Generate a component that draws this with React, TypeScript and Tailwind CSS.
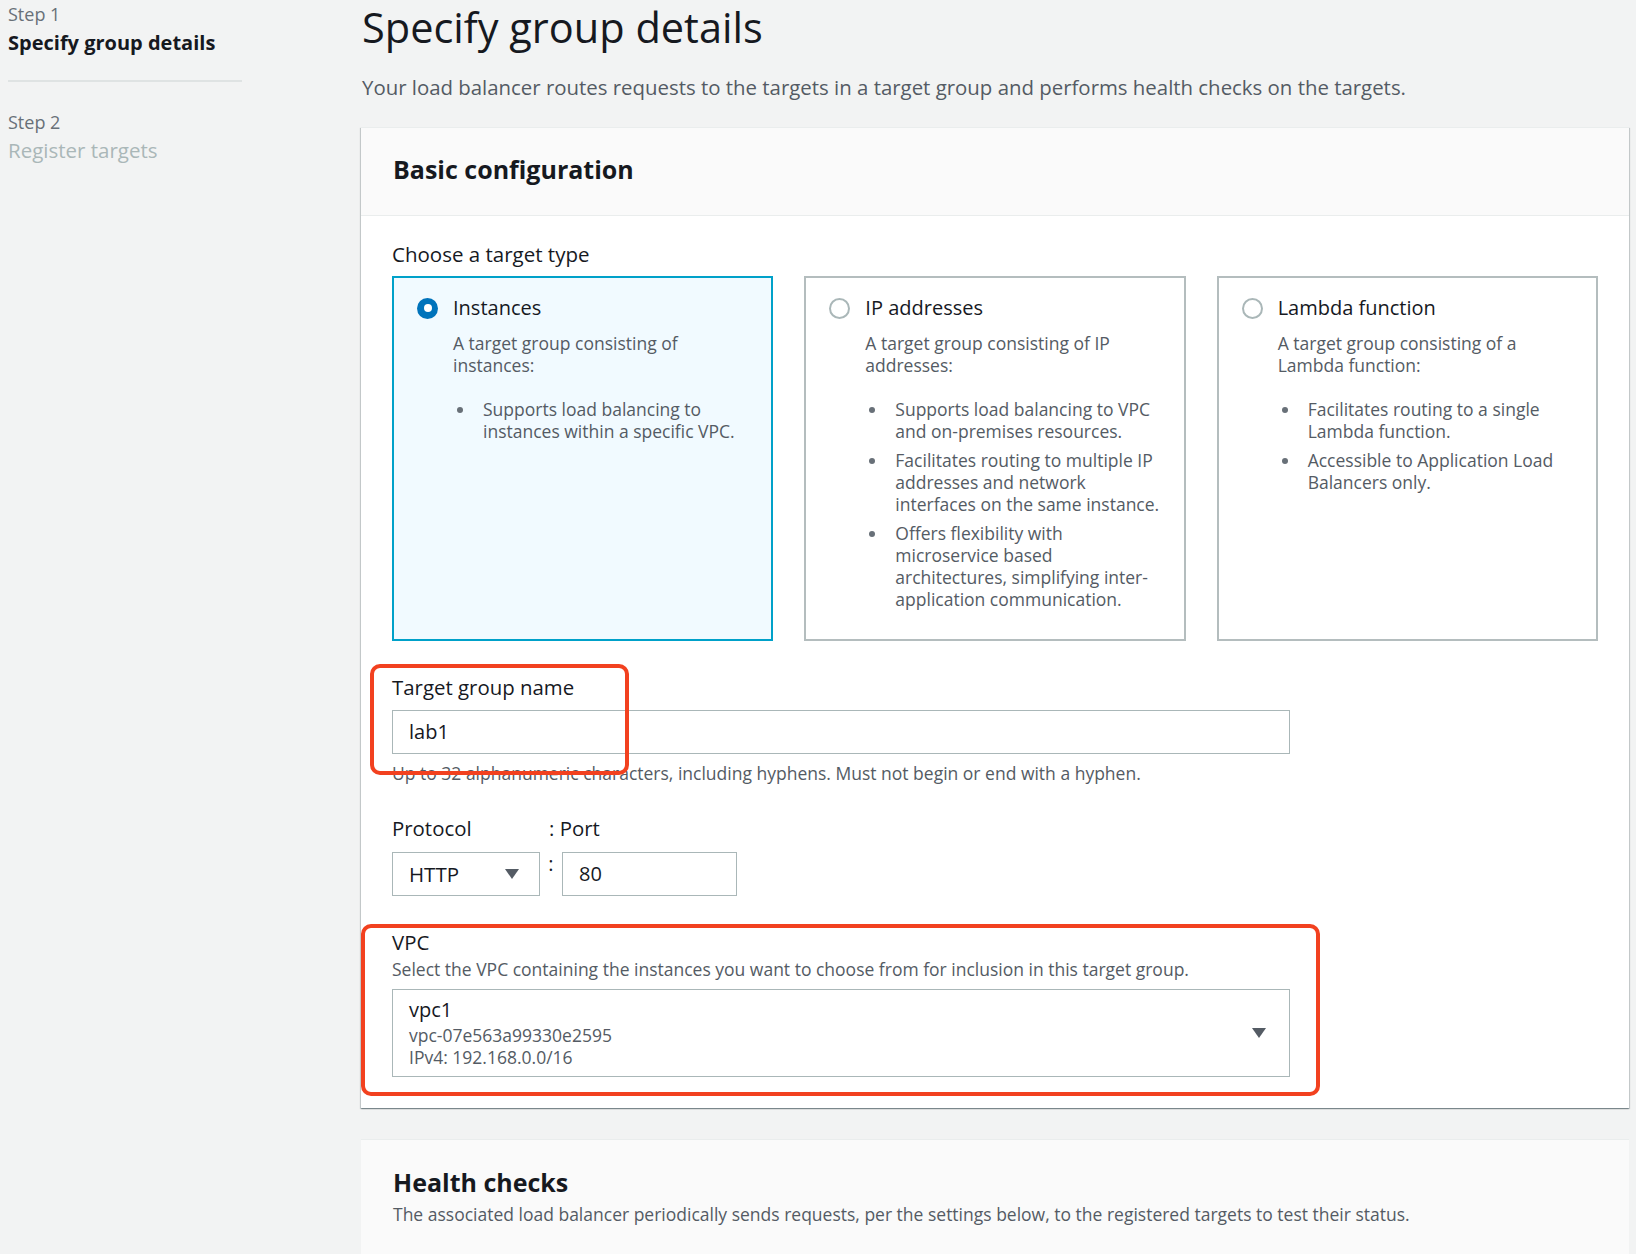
const tiles = [
  {
    title: "Instances",
    desc: "A target group consisting of instances:",
    items: ["Supports load balancing to instances within a specific VPC."],
    selected: true,
  },
  {
    title: "IP addresses",
    desc: "A target group consisting of IP addresses:",
    items: [
      "Supports load balancing to VPC and on-premises resources.",
      "Facilitates routing to multiple IP addresses and network interfaces on the same instance.",
      "Offers flexibility with microservice based architectures, simplifying inter-application communication.",
    ],
    selected: false,
  },
  {
    title: "Lambda function",
    desc: "A target group consisting of a Lambda function:",
    items: [
      "Facilitates routing to a single Lambda function.",
      "Accessible to Application Load Balancers only.",
    ],
    selected: false,
  },
];

function Caret() {
  return (
    <svg width="16" height="12" viewBox="0 0 16 12" className="shrink-0">
      <path d="M1 1 L15 1 L8 11 Z" fill="#545b64" />
    </svg>
  );
}

function Radio({ checked }: { checked: boolean }) {
  if (checked) {
    return (
      <span className="w-[21px] h-[21px] rounded-full bg-[#0073bb] flex items-center justify-center shrink-0">
        <span className="w-[8px] h-[8px] rounded-full bg-white" />
      </span>
    );
  }
  return <span className="w-[21px] h-[21px] rounded-full border-2 border-[#aab7b8] bg-white shrink-0" />;
}

function Tile({ t }: { t: (typeof tiles)[number] }) {
  return (
    <div
      className={
        t.selected
          ? "h-[365px] border-2 border-[#00a1c9] bg-[#f1faff] pt-[16px] pl-[23px] pr-4"
          : "h-[365px] border-2 border-[#b4bdbe] bg-white pt-[16px] pl-[23px] pr-4"
      }
    >
      <div className="flex items-center gap-[15px]">
        <Radio checked={t.selected} />
        <span className="text-[20px] leading-[28px] text-[#16191f]">{t.title}</span>
      </div>
      <div className="pl-[36px]">
        <p className="mt-[10px] text-[17.5px] leading-[22px] text-[#545b64] pr-6">{t.desc}</p>
        <ul className="mt-[22px] flex flex-col gap-[7px]">
          {t.items.map((it) => (
            <li key={it} className="flex text-[17.5px] leading-[22px] text-[#545b64]">
              <span className="w-[30px] pl-[4px] shrink-0 flex items-start pt-[9px]">
                <span className="w-[6px] h-[6px] rounded-full bg-[#687078]" />
              </span>
              <span>{it}</span>
            </li>
          ))}
        </ul>
      </div>
    </div>
  );
}

export default function App() {
  return (
    <div className="min-h-screen bg-[#f2f3f3] flex font-['Open_Sans',sans-serif] text-[#16191f] overflow-hidden">
      <aside className="w-[361px] shrink-0 pl-[8px]">
        <div className="w-[234px]">
          <div className="text-[18px] leading-[22px] text-[#687078] mt-[3px]">Step 1</div>
          <div className="text-[20px] leading-[26px] font-bold mt-[5px]">Specify group details</div>
          <div className="h-[2px] bg-[#dfe3e3] mt-[24px]" />
          <div className="text-[18px] leading-[22px] text-[#687078] mt-[29px]">Step 2</div>
          <div className="text-[20.5px] leading-[26px] text-[#aab7b8] mt-[4px]">Register targets</div>
        </div>
      </aside>

      <main className="flex-1 pr-[7px] relative">
        <h1 className="text-[41.5px] leading-[48px] mt-[3px] pl-[1px]">Specify group details</h1>
        <p className="text-[20.4px] leading-[28px] text-[#545b64] mt-[22px] pl-[1px]">
          Your load balancer routes requests to the targets in a target group and performs health checks on the targets.
        </p>

        <section className="mt-[26px] bg-white border-t border-[#eaeded] shadow-[0_1px_1px_0_rgba(0,28,36,0.3),1px_1px_1px_0_rgba(0,28,36,0.15),-1px_1px_1px_0_rgba(0,28,36,0.15)]">
          <div className="h-[88px] bg-[#fafafa] border-b border-[#eaeded] px-8 pb-[5px] flex items-center">
            <h2 className="text-[25px] leading-[30px] font-bold">Basic configuration</h2>
          </div>
          <div className="px-[31px] pt-[24px] pb-[31px] relative">
            <div className="text-[20.5px] leading-[28px]">Choose a target type</div>
            <div className="grid grid-cols-3 gap-[31px] mt-[8px]">
              {tiles.map((t) => (
                <Tile key={t.title} t={t} />
              ))}
            </div>

            <div className="w-[898px]">
              <div className="text-[20.4px] leading-[26px] mt-[33px]">Target group name</div>
              <div className="mt-[10px] h-[44px] border border-[#aab7b8] bg-white flex items-center px-4 text-[20px]">
                lab1
              </div>
              <div className="text-[17.5px] leading-[20px] text-[#545b64] mt-[9px]">
                Up to 32 alphanumeric characters, including hyphens. Must not begin or end with a hyphen.
              </div>

              <div className="flex mt-[32px] text-[20.4px] leading-[26px]">
                <span className="w-[157px]">Protocol</span>
                <span>: Port</span>
              </div>
              <div className="flex items-start mt-[11px]">
                <div className="w-[148px] h-[44px] border border-[#aab7b8] bg-white flex items-center justify-between pl-4 pr-[19px] text-[20.5px]">
                  <span>HTTP</span>
                  <Caret />
                </div>
                <span className="w-[22px] text-center text-[20px] leading-[20px] pt-[2px]">:</span>
                <div className="w-[175px] h-[44px] border border-[#aab7b8] bg-white flex items-center px-4 text-[20px]">
                  80
                </div>
              </div>

              <div className="text-[20.4px] leading-[26px] mt-[33px]">VPC</div>
              <div className="text-[17.5px] leading-[22px] text-[#545b64] mt-[3px]">
                Select the VPC containing the instances you want to choose from for inclusion in this target group.
              </div>
              <div className="mt-[9px] h-[88px] border border-[#aab7b8] bg-white flex items-center justify-between pl-4 pr-[22px]">
                <div className="flex flex-col">
                  <span className="text-[20px] leading-[24px]">vpc1</span>
                  <span className="text-[17.5px] leading-[22px] text-[#545b64] mt-[2px]">vpc-07e563a99330e2595</span>
                  <span className="text-[17.5px] leading-[22px] text-[#545b64]">IPv4: 192.168.0.0/16</span>
                </div>
                <Caret />
              </div>
            </div>

            <div className="absolute left-[9px] top-[448px] w-[259px] h-[111px] border-4 border-[#f2411f] rounded-[10px] pointer-events-none" />
            <div className="absolute left-0 top-[708px] w-[959px] h-[172px] border-4 border-[#f2411f] rounded-[10px] pointer-events-none" />
          </div>
        </section>

        <section className="mt-[31px] bg-[#fafafa] border-t border-[#eaeded] h-[140px] px-8 pt-[27px]">
          <h2 className="text-[25px] leading-[30px] font-bold">Health checks</h2>
          <p className="text-[17.5px] leading-[22px] text-[#545b64] mt-[6px]">
            The associated load balancer periodically sends requests, per the settings below, to the registered targets to test their status.
          </p>
        </section>
      </main>
    </div>
  );
}
